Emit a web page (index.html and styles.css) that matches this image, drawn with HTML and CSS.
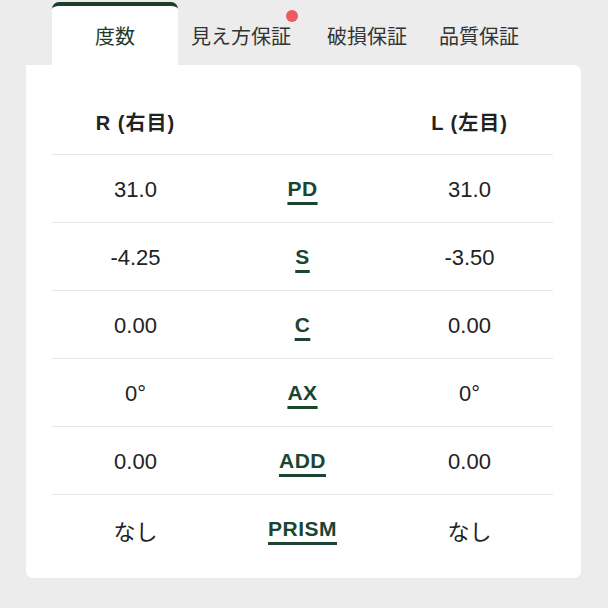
FILE: index.html
```html
<!DOCTYPE html>
<html lang="ja">
<head>
  <meta charset="UTF-8" />
  <meta name="viewport" content="width=device-width, initial-scale=1" />
  <title>度数</title>
  <link rel="stylesheet" href="styles.css">
</head>
<body>
  <div class="tabs">
    <div class="tab active">度数</div>
    <div class="tab">見え方保証<span class="dot"></span></div>
    <div class="tab">破損保証</div>
    <div class="tab">品質保証</div>
  </div>

  <div class="card">
    <div class="row head">
      <div>R (右目)</div>
      <div></div>
      <div>L (左目)</div>
    </div>
    <div class="row">
      <div class="val">31.0</div>
      <div><span class="label">PD</span></div>
      <div class="val">31.0</div>
    </div>
    <div class="row">
      <div class="val">-4.25</div>
      <div><span class="label">S</span></div>
      <div class="val">-3.50</div>
    </div>
    <div class="row">
      <div class="val">0.00</div>
      <div><span class="label">C</span></div>
      <div class="val">0.00</div>
    </div>
    <div class="row">
      <div class="val">0°</div>
      <div><span class="label">AX</span></div>
      <div class="val">0°</div>
    </div>
    <div class="row">
      <div class="val">0.00</div>
      <div><span class="label">ADD</span></div>
      <div class="val">0.00</div>
    </div>
    <div class="row last">
      <div class="val">なし</div>
      <div><span class="label">PRISM</span></div>
      <div class="val">なし</div>
    </div>
  </div>
</body>
</html>
```

FILE: styles.css
```css
body {
  margin: 0;
  padding: 0;
  background-color: #ececec;
  font-family: "Liberation Sans", "Noto Sans CJK JP", sans-serif;
  color: #222;
}

.tabs {
  display: grid;
  grid-template-columns: 126px 126px 126px 98px;
  padding: 2px 0 0 52px;
  height: 63px;
}

.tab {
  position: relative;
  display: flex;
  align-items: center;
  justify-content: center;
  padding-top: 4px;
  font-size: 20px;
  color: #333;
}

.tab.active {
  background: white;
  border-top: 4px solid #1b3f2b;
  border-radius: 7px 7px 0 0;
  padding-top: 0;
  color: #1f3a2b;
}

.dot {
  position: absolute;
  top: 8px;
  right: 6px;
  width: 12px;
  height: 12px;
  border-radius: 50%;
  background-color: #ec5a63;
}

.card {
  background: white;
  margin: 0 27px 0 26px;
  padding: 0 28px 15px 26px;
  border-radius: 0 7px 7px 7px;
}

.row {
  box-sizing: border-box;
  display: grid;
  grid-template-columns: 1fr 1fr 1fr;
  align-items: center;
  text-align: center;
  height: 68px;
  border-bottom: 1px solid #e6e6e6;
  font-size: 22px;
}

.row.head {
  height: 90px;
  align-items: end;
  font-weight: bold;
  font-size: 20px;
  letter-spacing: 1px;
}

.row.head div {
  padding-bottom: 18px;
}

.row.last {
  border-bottom: none;
}

.val {
  padding-top: 2px;
}

.label {
  font-weight: bold;
  color: #1c4530;
  font-size: 21px;
  letter-spacing: 0.5px;
  text-decoration: underline;
  text-decoration-thickness: 3px;
  text-underline-offset: 6px;
}
```
